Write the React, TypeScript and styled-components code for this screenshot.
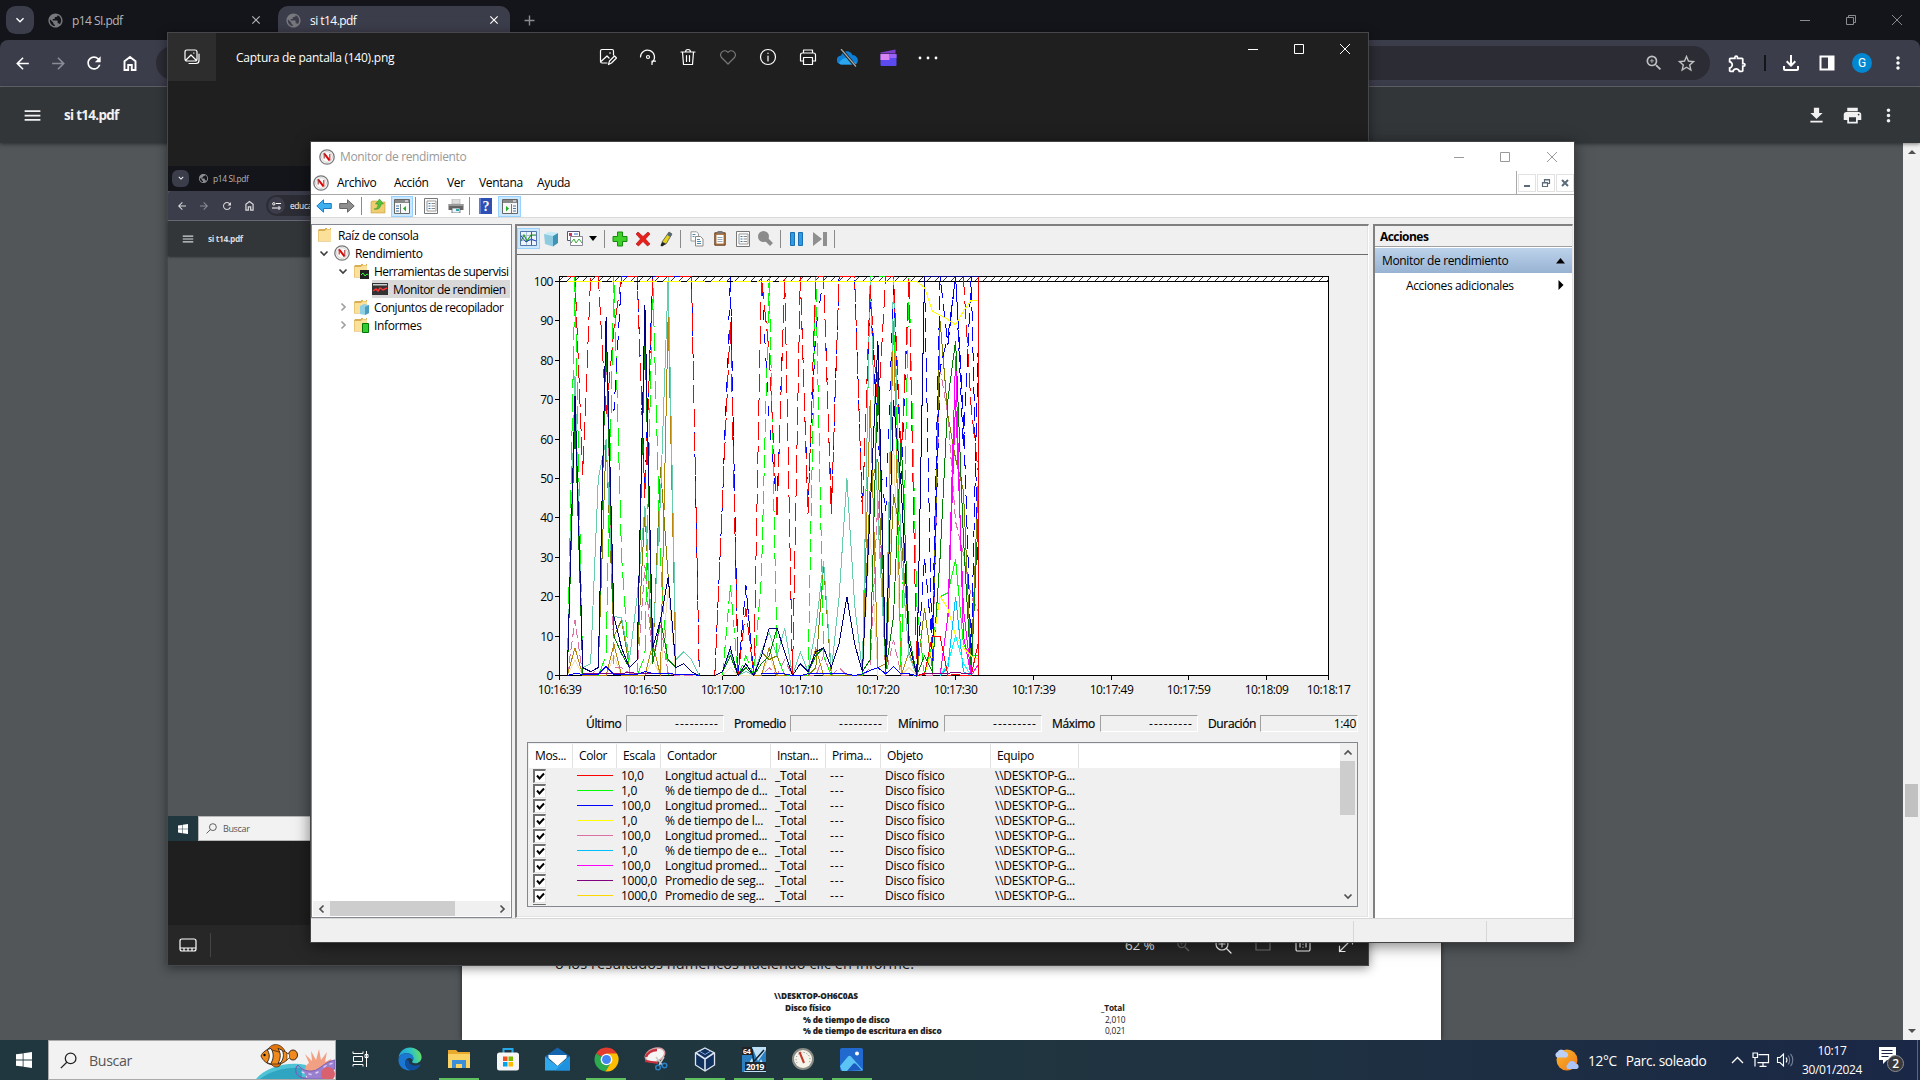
import React from "react";
import styled, { createGlobalStyle, css } from "styled-components";
import {
  MdArrowBack, MdArrowForward, MdRefresh, MdStarOutline, MdZoomIn, MdOutlineExtension,
  MdFileDownload, MdPrint, MdMoreVert, MdMenu, MdClose, MdAdd, MdOutlineFileDownload, MdPublic, MdExpandMore,
} from "react-icons/md";

const UI = `"Open Sans", "Noto Sans", sans-serif`;

const Global = createGlobalStyle`
  * { box-sizing: border-box; }
  html, body { margin: 0; padding: 0; overflow: hidden; background: #525659; }
  body { font-family: ${UI}; font-size: 12px; letter-spacing: -0.03em; }
  svg { display: block; flex: none; }
`;

const Screen = styled.div`
  position: relative;
  width: 1920px;
  height: 1080px;
  display: flex;
  flex-direction: column;
  overflow: hidden;
`;

const Cell = styled.span<{ $w: number; $h?: number; $on?: boolean }>`
  flex: none;
  display: flex;
  align-items: center;
  justify-content: center;
  width: ${(p) => p.$w}px;
  ${(p) => p.$h && css`height: ${p.$h}px;`}
  ${(p) => p.$on && css`background: #cce8ff; border: 1px solid #99d1ff;`}
`;
const Spacer = styled.span`flex: 1;`;
const Gap = styled.span<{ $w: number }>`flex: none; width: ${(p) => p.$w}px;`;

/* ---------- Chrome ---------- */
const TabStrip = styled.header`
  flex: none;
  display: flex;
  height: 40px;
  padding-left: 6px;
  background: #14151a;
  color: #c3c4c8;
`;
const TabSearch = styled.div<{ $s: number }>`
  display: flex;
  align-items: center;
  justify-content: center;
  width: ${(p) => p.$s}px;
  height: ${(p) => p.$s}px;
  border-radius: ${(p) => p.$s * 0.35}px;
  background: #3c3d4b;
  color: #fff;
`;
const Tab = styled.div<{ $active?: boolean; $w: number }>`
  display: flex;
  align-items: center;
  width: ${(p) => p.$w}px;
  height: 34px;
  margin-top: 6px;
  padding: 0 9px 6px 7px;
  border-radius: 10px 10px 0 0;
  color: ${(p) => (p.$active ? "#fff" : "#b4b5ba")};
  background: ${(p) => (p.$active ? "#3c3d4b" : "transparent")};
  svg:first-child { color: #77797e; margin-right: 8px; }
  span { flex: 1; letter-spacing: -0.045em; }
`;
const ChromeBar = styled.div`
  flex: none;
  display: flex;
  align-items: center;
  height: 47px;
  padding-left: 4px;
  color: #fff;
  background: #3c3d4b;
  border-bottom: 1px solid #6b6c76;
  border-radius: 8px 8px 0 0;
`;
const Strip = styled.div`background: #14151a; flex: none;`;
const Omnibox = styled.div`
  display: flex;
  align-items: center;
  justify-content: flex-end;
  width: 1554px;
  height: 34px;
  margin-left: 8px;
  padding-right: 8px;
  border-radius: 17px;
  background: #2b2c34;
  color: #bfc0c4;
`;
const Sep = styled.i<{ $c: string; $h: number; $w?: number }>`
  width: ${(p) => p.$w || 1}px;
  height: ${(p) => p.$h}px;
  background: ${(p) => p.$c};
`;
const Avatar = styled.b`
  width: 20px;
  height: 20px;
  border-radius: 50%;
  font: 12px/20px Roboto, sans-serif;
  text-align: center;
  color: #fff;
  background: #0288d1;
`;
const PdfBar = styled.div`
  position: relative;
  z-index: 1;
  flex: none;
  display: flex;
  align-items: center;
  height: 56px;
  padding: 0 14px;
  color: #f1f1f1;
  background: #323639;
  box-shadow: 0 1px 4px rgba(0, 0, 0, 0.5);
  font-size: 13.4px;
  font-weight: 700;
  letter-spacing: -0.05em;
`;
const PdfTitle = styled.span`flex: 1; padding-left: 14px;`;
const PdfView = styled.main`
  flex: 1;
  min-height: 0;
  display: flex;
  background: #525659;
`;
const PageArea = styled.div`flex: 1; display: flex; padding-left: 462px;`;
const Page = styled.article`
  width: 979px;
  padding: 811px 0 0 93px;
  overflow: hidden;
  background: #fff;
  box-shadow: 0 0 5px rgba(0, 0, 0, 0.6);
  color: #222;
`;
const Para = styled.p`
  margin: 0 0 16px;
  font-size: 14.5px;
  line-height: 20px;
  letter-spacing: 0.005em;
`;
const Report = styled.div`
  width: 420px;
  margin-left: 219px;
  font-size: 8.3px;
  font-weight: 700;
  letter-spacing: -0.02em;
  line-height: 11.8px;
`;
const ReportRow = styled.div<{ $in: number; $plain?: boolean }>`
  display: grid;
  grid-template-columns: 327px 1fr;
  b { padding-left: ${(p) => p.$in}px; }
  span { font-weight: ${(p) => (p.$plain ? 400 : 700)}; padding-left: ${(p) => (p.$plain ? 4 : 0)}px; }
`;
const PageScroll = styled.div`
  display: flex;
  flex-direction: column;
  align-items: center;
  width: 17px;
  padding: 6px 0;
  background: #f1f1f1;
  i { width: 13px; height: 33px; margin: 629px 0 auto; background: #c1c1c1; }
`;

/* ---------- Photos ---------- */
const Photos = styled.section`
  position: absolute;
  z-index: 2;
  left: 167px;
  top: 32px;
  width: 1202px;
  height: 934px;
  display: flex;
  flex-direction: column;
  border: 1px solid #46474a;
  background: #1f1f1f;
  box-shadow: 0 2px 10px rgba(0, 0, 0, 0.45);
  color: #fff;
`;
const PhotosHead = styled.div`
  display: flex;
  align-items: flex-start;
  height: 133px;
`;
const PhotosLogo = styled.div`
  display: flex;
  align-items: center;
  justify-content: center;
  width: 48px;
  height: 48px;
  background: #2d2d2d;
`;
const PhotosTitle = styled.div`
  width: 372px;
  padding-left: 20px;
  line-height: 50px;
  letter-spacing: -0.02em;
`;
const Picture = styled.div`
  height: 675px;
  width: 200px;
  display: flex;
  flex-direction: column;
  background: #525659;
  color: #d8d8da;
  font-size: 8.4px;
`;
const MiniTabs = styled.div`
  display: flex;
  align-items: center;
  height: 25px;
  padding: 0 0 1px 4px;
  gap: 9px;
  background: #14151a;
  color: #b4b5ba;
  svg { color: #8a8c90; }
  span { margin-left: -5px; }
`;
const MiniBar = styled.div`
  display: flex;
  align-items: center;
  height: 30px;
  padding-left: 3px;
  background: #3c3d4b;
  border-bottom: 1px solid #6b6c76;
  border-radius: 4px 0 0 0;
`;
const MiniPill = styled.div`
  display: flex;
  align-items: center;
  gap: 5px;
  height: 21px;
  flex: 1;
  margin-left: 6px;
  padding-left: 2px;
  border-radius: 11px 0 0 11px;
  background: #2b2c34;
  color: #fff;
  i { display: flex; align-items: center; justify-content: center; width: 17px; height: 17px; border-radius: 50%; background: #3c3d4b; }
`;
const MiniPdf = styled.div`
  display: flex;
  align-items: center;
  height: 35px;
  padding-left: 13px;
  gap: 13px;
  background: #323639;
  box-shadow: 0 1px 2px rgba(0, 0, 0, 0.5);
  font-weight: 700;
`;
const MiniTaskbar = styled.div`
  display: flex;
  height: 25px;
  margin-top: auto;
  background: #21373f;
`;
const MiniSearch = styled.div`
  flex: 1;
  display: flex;
  align-items: center;
  gap: 6px;
  padding-left: 7px;
  border: 1px solid #b8b8b8;
  background: #f2f2f2;
  color: #555;
  font-size: 9px;
`;
const PhotosFoot = styled.div`
  display: flex;
  align-items: center;
  height: 40px;
  margin-top: auto;
  background: #272727;
  font-size: 13.5px;
`;
const Zoom = styled.span`width: 38px; letter-spacing: -0.01em;`;

/* ---------- Performance monitor ---------- */
const Mmc = styled.section`
  position: absolute;
  z-index: 2;
  left: 310px;
  top: 141px;
  width: 1265px;
  height: 802px;
  display: flex;
  flex-direction: column;
  border: 1px solid #424446;
  background: #f0f0f0;
  box-shadow: 0 3px 14px rgba(0, 0, 0, 0.5);
  color: #000;
  white-space: nowrap;
`;
const TitleBar = styled.div`
  display: flex;
  align-items: center;
  height: 29px;
  padding-left: 8px;
  gap: 5px;
  background: #fff;
  color: #999;
`;
const MenuBar = styled.div`
  display: flex;
  align-items: center;
  height: 24px;
  padding-left: 2px;
  background: #fff;
  border-bottom: 1px solid #a9a9a9;
`;
const MenuItem = styled.span<{ $w: number }>`width: ${(p) => p.$w}px;`;
const MdiButtons = styled.div`
  display: flex;
  align-items: center;
  gap: 1px;
  height: 23px;
  padding-left: 1px;
  margin-left: auto;
  border-left: 1px solid #a9a9a9;
  i { display: flex; align-items: center; justify-content: center; width: 18px; height: 18px; border: 1px solid #e2e2e2; }
`;
const ToolBar = styled.div`
  display: flex;
  align-items: center;
  height: 23px;
  padding-left: 1px;
  background: #fff;
  border-bottom: 1px solid #dadada;
`;
const Body = styled.div`
  flex: 1;
  min-height: 0;
  display: flex;
  padding-top: 6px;
  background: #f0f0f0;
`;
const TreePane = styled.div`
  display: flex;
  flex-direction: column;
  width: 201px;
  margin-right: 3px;
  padding: 1px 1px 1px;
  border: 1px solid #828790;
  background: #fff;
`;
const TreeRow = styled.div<{ $in: number; $sel?: boolean; $tight?: boolean }>`
  display: flex;
  align-items: center;
  height: 18px;
  margin-left: ${(p) => p.$in}px;
  overflow: hidden;
  gap: 5px;
  letter-spacing: ${(p) => (p.$tight ? "-0.042em" : "-0.03em")};
  background: ${(p) => (p.$sel ? "#d9d9d9" : "transparent")};
`;
const HScroll = styled.div`
  display: flex;
  align-items: center;
  height: 15px;
  margin-top: auto;
  background: #f0f0f0;
  i { width: 125px; height: 15px; margin-right: auto; background: #cdcdcd; }
`;
const CenterPane = styled.div`
  display: flex;
  flex-direction: column;
  width: 854px;
  margin-right: 4px;
  border: 1px solid #fff;
  border-top: 2px solid #808080;
  border-left: 2px solid #808080;
  box-shadow: inset -1px -1px #e3e3e3;
`;
const ChartTools = styled.div`
  display: flex;
  align-items: center;
  height: 29px;
  padding-bottom: 3px;
  border-bottom: 1px solid #696969;
`;
const ChartBox = styled.div`height: 458px; width: 850px;`;
const Stats = styled.div`
  display: flex;
  align-items: center;
  height: 17px;
  margin-top: 2px;
  padding-left: 69px;
  -webkit-text-stroke: 0.2px #000;
`;
const StatLabel = styled.span<{ $w: number }>`width: ${(p) => p.$w}px;`;
const StatBox = styled.span<{ $last?: boolean }>`
  width: 98px;
  height: 17px;
  margin-right: 10px;
  padding-right: ${(p) => (p.$last ? 1 : 4)}px;
  border: 1px solid #fff;
  border-top-color: #a0a0a0;
  border-left-color: #a0a0a0;
  text-align: right;
  line-height: 15px;
  letter-spacing: ${(p) => (p.$last ? "-0.03em" : "0.085em")};
  -webkit-text-stroke: 0;
`;
const List = styled.div`
  display: flex;
  width: 831px;
  height: 165px;
  margin: 10px 0 0 10px;
  padding: 1px 2px 1px 1px;
  border: 1px solid #828790;
`;
const Rows = styled.div`flex: 1; overflow: hidden;`;
const Cols = css`
  display: grid;
  grid-template-columns: 44px 44px 44px 110px 55px 55px 110px 88px 1fr;
`;
const ListHead = styled.div`
  ${Cols}
  height: 24px;
  background: #fff;
  line-height: 24px;
  span { padding-left: 6px; border-right: 1px solid #e2e2e2; }
`;
const ListRow = styled.div`
  ${Cols}
  height: 15px;
  line-height: 15px;
  align-items: center;
  letter-spacing: -0.02em;
  span { padding-left: 4px; }
  span:nth-child(6) { letter-spacing: 0.08em; }
`;
const Check = styled.i`
  display: flex;
  align-items: center;
  justify-content: center;
  width: 13px;
  height: 14px;
  margin-left: 4px;
  background: #fff;
  border: 1px solid #e3e3e3;
  border-top: 2px solid #707070;
  border-left: 2px solid #707070;
`;
const Stroke = styled.i<{ $c: string }>`width: 36px; height: 1px; margin-left: 4px; background: ${(p) => p.$c};`;
const VScroll = styled.div`
  display: flex;
  flex-direction: column;
  align-items: center;
  justify-content: space-between;
  width: 15px;
  padding: 4px 0;
  background: #f0f0f0;
  i { width: 15px; height: 54px; margin: 3px 0 auto; background: #cdcdcd; }
`;
const ActionsPane = styled.div`
  flex: 1;
  margin-right: 1px;
  border-left: 2px solid #808080;
  border-top: 2px solid #808080;
  border-right: 1px solid #e3e3e3;
  background: #fff;
`;
const ActionsHead = styled.div`
  height: 21px;
  padding-left: 5px;
  border-bottom: 1px solid #a0a0a0;
  background: #f0f0f0;
  font-weight: 700;
  letter-spacing: -0.045em;
  line-height: 21px;
`;
const ActionsGroup = styled.div`
  display: flex;
  align-items: center;
  justify-content: space-between;
  height: 25px;
  margin-top: 1px;
  padding: 0 7px;
  background: linear-gradient(#bdd3eb, #98b2d2);
`;
const ActionsItem = styled.div`
  display: flex;
  align-items: center;
  justify-content: space-between;
  height: 24px;
  padding: 0 8px 0 31px;
`;
const StatusBar = styled.div`
  display: flex;
  height: 24px;
  border-top: 1px solid #d7d7d7;
  i { border-right: 1px solid #d7d7d7; margin-top: 2px; }
  i:nth-child(1) { width: 1043px; }
  i:nth-child(2) { width: 133px; }
`;

/* ---------- Taskbar ---------- */
const Taskbar = styled.footer`
  position: relative;
  z-index: 3;
  flex: none;
  display: flex;
  height: 40px;
  background: linear-gradient(90deg, #21373f 0%, #20363f 50%, #1c2c43 85%, #1a2746 100%);
  color: #fff;
`;
const Search = styled.div`
  display: flex;
  align-items: center;
  width: 288px;
  padding-left: 11px;
  gap: 12px;
  border: 1px solid #aaa;
  background: #f2f2f2;
  color: #555;
  font-size: 14.2px;
  span { flex: 1; }
`;
const AppButton = styled.div<{ $run?: boolean }>`
  display: flex;
  align-items: center;
  justify-content: center;
  width: 49.15px;
  border-bottom: 2px solid transparent;
  background: ${(p) => (p.$run ? "linear-gradient(#5fc05f, #5fc05f) center bottom / 40px 2px no-repeat border-box" : "none")};
`;
const Weather = styled.span`
  display: flex;
  align-items: center;
  gap: 9px;
  width: 146px;
  padding-left: 9px;
  font-size: 13.7px;
`;
const Clock = styled.span`
  width: 70px;
  padding-top: 1px;
  text-align: center;
  line-height: 19px;
`;

/* ---------- Drawings ---------- */
const WinMin = ({ c }: { c: string }) => <svg width="12" height="12"><path d="M1 6.5h10" stroke={c} /></svg>;
const WinMax = ({ c }: { c: string }) => <svg width="12" height="12"><path d="M1.500 1.500h9v9h-9z" stroke={c} fill="none" /></svg>;
const WinClose = ({ c }: { c: string }) => <svg width="12" height="12"><path d="M1 1l10 10M11 1L1 11" stroke={c} fill="none" /></svg>;
const Home = ({ s = 20 }) => (
  <svg width={s} height={s} viewBox="0 0 20 20" fill="none" stroke="currentColor" strokeWidth="1.9"><path d="M4.500 8.200L10 4l5.500 4.200V17h-3.700v-5H8.200v5H4.500z" /></svg>
);
const Gauge = ({ s = 16 }) => (
  <svg width={s} height={s} viewBox="0 0 16 16">
    <circle cx="8" cy="8" r="7.200" fill="#fff" stroke="#777" strokeWidth="1.300" />
    <circle cx="8" cy="8" r="5.400" fill="#fafafa" stroke="#bbb" strokeWidth=".7" />
    <path d="M5.200 4.500l5.300 6.800" stroke="#d00" strokeWidth="2" />
    <path d="M5.200 4v5.500M10.800 5v6.500" stroke="#a33" strokeWidth="1.100" />
  </svg>
);
const BigGauge = () => (
  <svg width="24" height="26" viewBox="0 0 24 26">
    <circle cx="12" cy="13" r="11" fill="#8d8d86" /><circle cx="12" cy="13" r="9" fill="#f5f3ea" />
    <path d="M6 17A7 7 0 1 1 18 17" fill="none" stroke="#777" strokeWidth="1" strokeDasharray="1 2" />
    <path d="M8.500 6l4.500 11" stroke="#c0392b" strokeWidth="2" />
  </svg>
);
const Folder = ({ k }: { k?: "mon" | "cube" | "rep" }) => (
  <svg width="16" height="16" viewBox="0 0 16 16">
    <path d="M1 3.500l1-1.500h6V1h6v13.500H1z" fill="#d9ae52" />
    <path d="M1.500 4H8l1-1.500h5V14H1.500z" fill="#fbe09a" /><path d="M10 1.500h3" stroke="#fff" />
    {k === "mon" && <><path d="M7 7h9v9H7z" fill="#222" /><path d="M8 12l2-2 2 3 2-2 1.500 1" stroke="#3f3" fill="none" /></>}
    {k === "cube" && <><path d="M7 7l4-2 5 1v8l-4 2-5-1z" fill="#8fcfe4" /><path d="M12 8l4-2v8l-4 2z" fill="#4a9dbd" /></>}
    {k === "rep" && <path d="M9.500 6.500h6v9h-6z" fill="#3c3" stroke="#070" />}
  </svg>
);
const MonitorIcon = () => (
  <svg width="16" height="14" viewBox="0 0 16 14"><path d="M0 1h16v12H0z" fill="#333" /><path d="M1 2h14v1.500H1z" fill="#ccc" /><path d="M1 9l3-2 2 2 2-3 3 2 4-2" fill="none" stroke="#f33" strokeWidth="1.500" /></svg>
);
const Flip = styled.span`display: flex; transform: scaleX(-1);`;
const ArrowShape = ({ fill, stroke }: { fill: string; stroke: string }) => (
  <svg width="16" height="14" viewBox="0 0 16 14"><path d="M.8 7L7.500.8v3.700h7.800v5H7.500v3.700z" fill={fill} stroke={stroke} /></svg>
);
const UpFolder = () => (
  <svg width="16" height="16" viewBox="0 0 16 16"><path d="M1 4l1-1h5l1 1h7v11H1z" fill="#f0cd72" stroke="#c69a3a" strokeWidth=".6" /><path d="M4 11c3 0 4-2 4-5H5.500L9.500 1l4 5H11c0 4-3 6-7 5z" fill="#55c03a" stroke="#2c8a1c" strokeWidth=".5" /></svg>
);
const TreeToggle = ({ right }: { right?: boolean }) => (
  <svg width="16" height="15" viewBox="0 0 16 15"><path d="M.5.5h15v14H.5z" fill="#f7f7f7" stroke="#666" /><path d="M1 1h14v3H1z" fill="#888" /><path d="M11 2h3" stroke="#fff" /><path d={right ? "M9.500 5v9" : "M6.500 5v9"} stroke="#777" />{right ? <><path d="M4 7l3 2.500-3 3z" fill="#1fae1f" /><path d="M11 7h3M11 9.500h3M11 12h3" stroke="#4477aa" /></> : <><path d="M12 7L9 9.500l3 3z" fill="#1fae1f" /><path d="M2 7h3M2 9.500h3M2 12h3" stroke="#4477aa" /></>}</svg>
);
const Props = () => (
  <svg width="16" height="16" viewBox="0 0 16 16"><path d="M1.500.500h13v15h-13z" fill="#fafafa" stroke="#777" /><path d="M4 3h9v10H4z" fill="#fff" stroke="#999" /><path d="M5.500 5.500h2M5.500 8h2M5.500 10.500h2" stroke="#37a" /><path d="M8.500 5.500h3.500M8.500 8h3.500M8.500 10.500h3.500" stroke="#888" /></svg>
);
const Printer = () => (
  <svg width="16" height="14" viewBox="0 0 16 14"><path d="M4 0h8v5H4z" fill="#ddd" stroke="#aaa" strokeWidth=".6" /><path d="M.5 5h15v6H.5z" fill="#666" /><path d="M1 5h14v2H1z" fill="#999" /><path d="M4 9h8v5H4z" fill="#e8f3fa" stroke="#555" strokeWidth=".7" /><path d="M8 10h3v2H8z" fill="#2aa7b0" /></svg>
);
const Help = () => (
  <svg width="13" height="16" viewBox="0 0 13 16"><rect width="13" height="16" fill="#2e4fb4" /><path d="M1 0v16" stroke="#8fa5e6" /><text x="3.500" y="13" fontSize="14" fontWeight="700" fill="#fff" fontFamily="Liberation Serif, serif">?</text></svg>
);
const LineChart = () => (
  <svg width="17" height="15" viewBox="0 0 17 15"><path d="M.5.5h16v14H.5z" fill="#eef4fb" stroke="#5577aa" /><path d="M1 4.500h15M1 9.500h15M6.500 1v13" stroke="#a9bfdc" /><path d="M1 10l3-6 3 6 4-6h5" fill="none" stroke="#2a9a2a" strokeWidth="1.200" /><path d="M1 5l5 6 5-3 5 2" fill="none" stroke="#2244bb" /><path d="M11.500 1v13" stroke="#d22" /></svg>
);
const Cube = () => (
  <svg width="16" height="16" viewBox="0 0 16 16"><path d="M1 3l6-2.500L15 2l-5 3z" fill="#c7ecf7" /><path d="M1 3l9 2v10.500L2 13z" fill="#8fcbe0" /><path d="M10 5l5-3v10l-5 3.500z" fill="#3f93b4" /></svg>
);
const ChartPic = () => (
  <svg width="16" height="15" viewBox="0 0 16 15"><path d="M.5.500h12v9H.5z" fill="#fff" stroke="#557" /><path d="M2 2h3v3H2z" fill="#c36" /><path d="M7 3h4" stroke="#36c" /><path d="M3.500 5.500h12v9h-12z" fill="#fff" stroke="#889" /><path d="M4 12l3-4 2 4 3-4 3 4" fill="none" stroke="#3a3" /></svg>
);
const Plus = () => <svg width="16" height="16" viewBox="0 0 16 16"><path d="M5.500 1h5v4.500H15v5h-4.500V15h-5v-4.500H1v-5h4.500z" fill="#3fd02a" stroke="#158a0d" /></svg>;
const Cross = () => <svg width="16" height="16" viewBox="0 0 16 16"><path d="M3 1l5 4.500L13 1l2 2-4.500 5 4.500 5-2.500 2L8 10.500 3.500 15 1 13l4.500-5L1 3z" fill="#e8201c" stroke="#a30d0d" strokeWidth=".6" /></svg>;
const Pen = () => <svg width="16" height="16" viewBox="0 0 16 16"><path d="M11 1l3 2-6 10-4-2z" fill="#e3d21e" stroke="#554" strokeWidth=".8" /><path d="M11 1l3 2-1.500 3-3.500-2z" fill="#567" /><path d="M4 11l4 2-4 2.500-1.500-1z" fill="#222" /></svg>;
const Copy = () => <svg width="14" height="16" viewBox="0 0 14 16"><path d="M1 .8h5.500l2 2V10H1z" fill="#fff" stroke="#999" /><path d="M5.500 5.500h5l2.500 2.500v7H5.500z" fill="#fff" stroke="#888" /><path d="M2.500 3.500h3M2.500 5.500h2M7 8.500h3M7 10.500h4M7 12.500h4" stroke="#58a" /></svg>;
const Paste = () => <svg width="12" height="15" viewBox="0 0 12 15"><path d="M.8 1.800h10.400v12.400H.8z" fill="#b87a45" stroke="#5f3a1b" /><path d="M2.500 4h7v8.500h-7z" fill="#fff" /><path d="M3.500 0h5v3h-5z" fill="#777" /><path d="M3.500 6.500h5M3.500 8.500h5M3.500 10.500h5" stroke="#9ab" /></svg>;
const Lens = () => <svg width="15" height="15" viewBox="0 0 15 15"><circle cx="5.500" cy="5.500" r="5.500" fill="#8b8b8b" /><path d="M8 8l5.500 5.500" stroke="#8b8b8b" strokeWidth="4" /></svg>;
const Pause = () => <svg width="13" height="14"><path d="M.5.5h4v13h-4zM8.500.5h4v13h-4z" fill="#2e9be6" stroke="#1b6fb0" /></svg>;
const Step = () => <svg width="14" height="14"><path d="M0 0l9 7-9 7zM10 0h4v14h-4z" fill="#8f8f8f" /></svg>;
const Chevron = ({ d, c = "#404040" }: { d: "down" | "right" | "left" | "up"; c?: string }) => {
  const path = { down: "M1.500 3.500l3.500 3.500 3.500-3.500", up: "M1.500 6.500L5 3l3.500 3.500", right: "M3.500 1.500L7 5 3.500 8.500", left: "M6.500 1.500L3 5l3.500 3.500" }[d];
  return <svg width="10" height="10"><path d={path} fill="none" stroke={c} strokeWidth="1.700" /></svg>;
};
const WinLogo = ({ s }: { s: number }) => (
  <svg width={s} height={s} viewBox="0 0 16 16" fill="#fff"><path d="M0 2.300L6.700 1.400v6.200H0zM7.500 1.300L16 0v7.600H7.500zM0 8.400h6.700v6.200L0 13.700zM7.500 8.400H16V16l-8.500-1.300z" /></svg>
);
const Mag = ({ s, c }: { s: number; c: string }) => (
  <svg width={s} height={s} viewBox="0 0 16 16" fill="none" stroke={c} strokeWidth="1.200"><circle cx="10" cy="6" r="5" /><path d="M6.400 9.600L.8 15.200" /></svg>
);
const Fish = () => (
  <svg width="79" height="38" viewBox="0 0 79 38">
    <path d="M0 38C10 26 32 20 50 24v14z" fill="#4fc3d6" />
    <path d="M4 38c12-9 26-12 42-11v11z" fill="#2fa5c2" />
    <path d="M5 15C8 7 22 4 31 12c2 2 2 5 0 7-9 8-22 6-26-4z" fill="#f08a1c" stroke="#3a2412" strokeWidth=".9" />
    <path d="M12 8c6-8 14-4 17 2l-6 1zM15 23c3 4 8 4 10 0z" fill="#e0750d" stroke="#3a2412" strokeWidth=".7" />
    <path d="M11 8.500c3 4 3 9 0 13l3.500 1.500c3.500-5 3.500-11 .5-15.500zM22 7.500c3 5 3 9 0 15l3-1c3-5 3-9 1-12.500z" fill="#fff" stroke="#222" strokeWidth=".9" />
    <ellipse cx="37" cy="14" rx="4.500" ry="5" fill="#f08a1c" stroke="#3a2412" strokeWidth="1" /><path d="M31 12l2.500 1.500v3L31 19z" fill="#fff" stroke="#222" strokeWidth=".6" />
    <circle cx="8.500" cy="14" r="1.200" />
    <path d="M50 34c-3-6 0-10 3-12l-4-9 7 7-1-10 5 9 3-11 2 11 6-8-2 10 6-3v16z" fill="#f2a083" />
    <path d="M42 24c-5 5-2 14 10 13M42 24c4 6 14 8 20 4s10-8 17-9v9c-6 0-8 5-9 10H52C42 38 36 30 42 24z" fill="#9a80cf" stroke="#7a5fb5" />
    <path d="M46 31l2 1M53 33l2 .5M60 32l2-1M68 26l2-1.500M74 23l2-.6" stroke="#d9cdf2" strokeWidth="1.500" strokeLinecap="round" />
    <circle cx="72" cy="33" r="7" fill="#d9606e" />
  </svg>
);
const TaskView = () => <svg width="18" height="16" viewBox="0 0 18 16" fill="none" stroke="#fff"><path d="M1 .5v2h10v-2M1 15.500v-2h10v2M1.500 5.500h9v5h-9zM14.500 0v16M13 3.500h3v3h-3z" /></svg>;
const Edge = () => (
  <svg width="24" height="24" viewBox="0 0 24 24">
    <defs><linearGradient id="eg" x1="0" y1=".5" x2="1" y2=".3"><stop offset="0" stopColor="#1b9de2" /><stop offset=".55" stopColor="#2fc2c4" /><stop offset="1" stopColor="#6be05c" /></linearGradient></defs>
    <path d="M.6 11C1 5 6 .5 12 .5S23.600 5 23.600 10c0 4-3 6.300-6.500 6.300-2.200 0-3-.8-3-1.500 0-1 1.300-1.300 1.300-3.600C15.400 8 12 6.300 8.500 6.300 4.500 6.300 1.500 8.500.6 11z" fill="url(#eg)" />
    <path d="M.5 12.500C1 8.500 4.500 6.300 8.500 6.300c3.500 0 6.900 1.700 6.900 4.900 0 .9-.3 1.500-.6 2C14 10.500 9 9.500 7.500 14c-1.200 4 1.500 8.500 5.500 9.300C6 24.300 0 19 .5 12.500z" fill="#1a78d2" />
    <path d="M7.500 14c-1.200 4 1.500 8.500 5.500 9.300 4 .3 7.500-1.800 9.300-5 .3-.6-.2-1-.8-.7-4.500 2.300-10.500.7-11-4.600-1 .1-2.500.2-3 1z" fill="#0f4f9e" />
  </svg>
);
const Explorer = () => <svg width="24" height="22" viewBox="0 0 24 22"><path d="M1 2h8l2 2h12v16H1z" fill="#e9a92c" /><path d="M1 6h22v14H1z" fill="#fbd264" /><path d="M5 12h14v8h-4v-4H9v4H5z" fill="#3a8fd6" /></svg>;
const Store = () => <svg width="24" height="24" viewBox="0 0 24 24"><path d="M7.500 6V2h9v4" fill="none" stroke="#29a9e8" strokeWidth="2" /><rect x="1" y="5.500" width="22" height="18" rx="2.500" fill="#f6f6f6" /><path d="M7 9.500h4.500V14H7z" fill="#f25022" /><path d="M12.500 9.500H17V14h-4.500z" fill="#7fba00" /><path d="M7 15h4.500v4.500H7z" fill="#00a4ef" /><path d="M12.500 15H17v4.500h-4.500z" fill="#ffb900" /></svg>;
const Mail = () => <svg width="25" height="24" viewBox="0 0 25 24"><path d="M0 9.500L12.500.5 25 9.500v3H0z" fill="#1565ae" /><path d="M3.500 8h18v3l-9 8-9-8z" fill="#fff" /><path d="M0 9.500l12.500 9.500L25 9.500V23.500H0z" fill="#2fa9ee" /><path d="M3.500 8.500h18L12.500 17z" fill="#fff" /><path d="M25 9.500v14H10z" fill="#1787d8" opacity=".7" /></svg>;
const ChromeLogo = () => <svg width="25" height="25" viewBox="0 0 24 24"><path d="M12 12L2 6.200A11.500 11.500 0 0 1 22 6.200z" fill="#e33b2e" /><path d="M12 12L2 6.200A11.500 11.500 0 0 0 11 23.500l5-8z" fill="#2da94f" /><path d="M12 6.300h10A11.500 11.500 0 0 1 11 23.500l5.500-9z" fill="#fdbd00" /><circle cx="12" cy="12" r="5.600" fill="#fff" /><circle cx="12" cy="12" r="4.300" fill="#4285f4" /></svg>;
const Snip = () => <svg width="25" height="24" viewBox="0 0 25 24"><ellipse cx="12" cy="8" rx="10" ry="6.500" transform="rotate(-20 12 8)" fill="#f5f5f5" stroke="#d8a0a4" strokeWidth="1.500" /><path d="M3 10c1-4 6-7 11-7" stroke="#c9303e" strokeWidth="2.500" fill="none" /><path d="M2 14l13 2" stroke="#c9303e" strokeWidth="2" /><path d="M13 10l6 8M21 10l-5 8" stroke="#ccc" strokeWidth="1.500" /><circle cx="15" cy="20.500" r="2.300" fill="none" stroke="#2a7fc0" strokeWidth="1.500" /><circle cx="21.500" cy="18.500" r="2.300" fill="none" stroke="#2a7fc0" strokeWidth="1.500" /></svg>;
const VBox = () => <svg width="22" height="25" viewBox="0 0 22 25"><path d="M11 1l9.500 5v12L11 24l-9.500-6V6z" fill="#10305e" stroke="#dde6f2" strokeWidth="1.300" /><path d="M2 6l9 6 9-6M11 12v11" stroke="#dde6f2" strokeWidth="1.600" fill="none" /><path d="M6 4.500l5 3 5-3" stroke="#7fa5d8" fill="none" /></svg>;
const App2019 = () => (
  <svg width="24" height="25" viewBox="0 0 24 25"><path d="M0 0h24v25H0z" fill="#2a7fc0" /><path d="M10 0l6 14L24 3v-3zM2 25l8-14 6 8 3-7 5 10v3z" fill="#bfe0f5" /><path d="M10 2l3 22M22 3L7 20" stroke="#123" strokeWidth="1.500" /><rect width="10" height="8" fill="#222" /><text x="1" y="7" fontSize="7" fill="#fff" fontFamily="Open Sans" fontWeight="700">64</text><rect x="3" y="15" width="21" height="9" fill="#1b2733" /><text x="4" y="23" fontSize="8.500" fill="#fff" fontFamily="Open Sans" fontWeight="700">2019</text></svg>
);
const PhotosApp = () => <svg width="23" height="23" viewBox="0 0 23 23"><rect width="23" height="23" rx="2" fill="#2168cf" /><path d="M0 18L8 8.500c1-1 2-1 3 0L23 22l-2 1H2z" fill="#5cc3f5" /><path d="M7 23l6-7c1-1 2-1 3 0l6 6.500z" fill="#1c5cc0" /><circle cx="17" cy="5.500" r="2" fill="#fff" /></svg>;
const Sun = () => (
  <svg width="26" height="24" viewBox="0 0 26 24"><defs><linearGradient id="sn" x1="0" y1="0" x2="1" y2="1"><stop offset="0" stopColor="#fbb62a" /><stop offset="1" stopColor="#ee7a1b" /></linearGradient></defs><circle cx="13" cy="12" r="10.500" fill="url(#sn)" /><path d="M3 9.500a3 3 0 0 1 .5-5.500A4 4 0 0 1 11 4a2.900 2.900 0 0 1 1.500 5.500z" fill="#bcd0f7" /><path d="M13.500 21a3 3 0 0 1 .5-5 4.200 4.200 0 0 1 8-.2 2.700 2.700 0 0 1 1 5.200z" fill="#aac4f5" /></svg>
);
const Net = () => <svg width="18" height="16" viewBox="0 0 18 16" fill="none" stroke="#fff" strokeWidth="1.200"><path d="M6.500 2.600h10v8H5.500M11 10.500v3.500M7.500 14.400h7M3 6v8.400" /><path d="M1 1h4.500v4.500H1z" fill="#1c2b44" /></svg>;
const Vol = () => <svg width="18" height="16" viewBox="0 0 18 16" fill="none" stroke="#fff" strokeWidth="1.100"><path d="M1.500 5.500h2.500l3.500-3.500v12L4 10.500H1.500z" /><path d="M10 5.500c1.200 1.500 1.200 3.500 0 5" /><path d="M12.200 3.500c2 2.500 2 6.500 0 9M14.500 1.800c3 3.500 3 9 0 12.400" stroke="#77829a" /></svg>;
const Notice = () => (
  <svg width="28" height="28" viewBox="0 0 28 28"><path d="M2 1h17v13H10l-4 4v-4H2z" fill="#fff" /><path d="M4.500 4.500h11M4.500 7.500h11M4.500 10.500h7" stroke="#1b2845" strokeWidth="1.200" /><circle cx="18.500" cy="17.500" r="8" fill="#3a3a3c" stroke="#8a8f9a" /><text x="15.200" y="22" fontSize="12" fontWeight="600" fill="#fff" fontFamily="Open Sans">2</text></svg>
);
const LineIcon = ({ d, c = "#fff", fill }: { d: string; c?: string; fill?: string }) => (
  <svg width="18" height="18" viewBox="0 0 18 18" fill={fill || "none"} stroke={c} strokeWidth="1.200" strokeLinecap="round" strokeLinejoin="round"><path d={d} /></svg>
);
const OneDriveOff = () => <svg width="22" height="18" viewBox="0 0 22 18"><path d="M4.500 15.500a4.500 4.500 0 0 1-.5-9C6 1.500 13 .5 15.500 6 22 6.500 22.500 15 17.500 15.500z" fill="#0d7fd6" /><path d="M2 14c3-5 8-6 10-4.500l7.500 4.500c-.5 1-1 1.500-2 1.500h-13c-1 0-2-.6-2.500-1.500z" fill="#2aa7ee" /><path d="M4 0l15 18" stroke="#1f1f1f" strokeWidth="3" /><path d="M4 0l15 17.500" stroke="#aaa" strokeWidth="1.200" /></svg>;
const Clip = () => <svg width="17" height="17" viewBox="0 0 17 17"><path d="M.5 3.500L15.500.5v4H.5z" fill="#7d3fd0" /><rect x=".5" y="5" width="16" height="12" rx="1" fill="#5a4af0" /><path d="M.5 5h9v6h-9z" fill="#d884f2" /><path d="M9.500 5h7v4h-7z" fill="#9a63f5" /></svg>;

/* ---------- Chart ---------- */
type Series = { c: string; from: number; v: number[]; dash?: string; off?: number };
const T = 101.2;
const series: Series[] = [
  { c: "#f5deb3", from: 1, v: [0, 4, 0, 0, 0, 0, 5, 0, 0, 0, 0, 4, 0, 22, 0, 0, 0, 0] },
  { c: "#f5deb3", from: 20, v: [0, 0, 2, 0, 0, 0, 0, 5, 0, 0, 0, 0, 0, 2, 0, 0, 0, 0, 0, 0, 36, 0, 0, 60, 0, 2, 0] },
  { c: "#db70a3", from: 1, v: [0, 14, 0, 0, 2, 86, 2, 2, 0.6, 0.5, 28, 3, 13, 0.5, 0, 0, 0, 0], dash: "9 4" },
  { c: "#db70a3", from: 25, v: [0, 0, 2, 0, 4, 0, 0, 0, 0, 5, 0, 2, 0, 0, 0, 2, 45, 0, 9, 0, 0, 0, 0, 0, 78, 66, 39, 31, 20, 16], dash: "9 4" },
  { c: "#b8860b", from: 1, v: [0, 7, 0, 0, 0, 0, 8, 0, 0, 0, 0, 8, 0, 92, 0] },
  { c: "#b8860b", from: 25, v: [0, 0, 7, 0, 0, 0, 0, 0, 7, 0, 0, 0, 0, 0, 0, 70, 2, 3, 90, 0, 6, 0] },
  { c: "#808000", from: 5, v: [2, 60, 10, 14, 2, 4, 42, 4, 53, 25, 2] },
  { c: "#808000", from: 25, v: [0, 6, 4, 5, 0, 0, 0, 0, 2, 28, 0, 0, 0, 0, 0, 48, 55, 0, 46, 35, 10, 0, 17, 2, 90, 66, 55, 47, 2, 54] },
  { c: "#0f0", from: 1, v: [0, T, 0], dash: "18 6" },
  { c: "#0f0", from: 5, v: [0, 5, T, 30, 1], dash: "18 6" },
  { c: "#0f0", from: 10, v: [0, 5, T, 28, 0], dash: "18 6" },
  { c: "#0f0", from: 21, v: [0, 23, 0, 5, 0, 25, T, 5, 0, 0, 0, 0, T, 5, 0], dash: "13 5" },
  { c: "#0f0", from: 39, v: [0, T, T, T, T, 0, T, 18, 0], dash: "18 6" },
  { c: "#0f0", from: 47, v: [0, 8, 20, 21, 29.5, 8, 5, 5] },
  { c: "#66cdaa", from: 1, v: [0, 76, 2, 3, 50, 60, 15, 14.6, 4, 20, 43, 7, 45, T, 4, 6, 4, 0] },
  { c: "#66cdaa", from: 20, v: [0, 1, 6, 0, 1, 0, 6, 11, 5, 12, 0, 6, 1, 12, 29, 1, 20, 50, 18, 1, T, 40, 2, T, 30, 5, 0] },
  { c: "#00f", from: 7, v: [67, T, T, T, 47, T], dash: "14 8", off: 4 },
  { c: "#00f", from: 12, v: [T, T, T, T, T, T, 0], dash: "14 8", off: 4 },
  { c: "#00f", from: 20, v: [0, 45, T, 0, 23, 0, T, 65, 43, T, 0, T, 43, 88, T, 43, T, T, T, 42, 97, 60, 41, 98, 50, T, 0], dash: "10 14", off: 4 },
  { c: "#00f", from: 22, v: [T, 0, 23, 0], dash: "14 6" },
  { c: "#00f", from: 46, v: [0, 30, 8, T, 84, T, 58, T, 20], dash: "14 6" },
  { c: "#00f", from: 46, v: [0, T, 2, 78, 86, T, 66, 5, 92], dash: "14 6" },
  { c: "#f00", from: 1, v: [T, T, 51, T, T, 66, 88, T, T, T, 45, T, T, T, T, T, T, 0], dash: "18 6" },
  { c: "#f00", from: 20, v: [0, 45, 90, 0, 17, 0, T, 82, 40, T, 0, T, 41, T, T, 41, T, T, T, 41, 99, 66, T, T, 55, T, 0], dash: "18 6" },
  { c: "#f00", from: 52, v: [T, 68, 50], dash: "18 6" },
  { c: "#008000", from: 1, v: [0, 66, 0] },
  { c: "#008000", from: 5, v: [2, 86, 10, 5.5, 2, 4, 87, 3, 14, 4, 2] },
  { c: "#008000", from: 20, v: [0, 1, 5, 0, 2, 0, 3, 5, 12, 6, 0, 3, 1, 5, 7, 2, 8, 20, 8, 1, 4, 77, 1, 15, 60, 10, 0, 5, 1, 30, 70, 85, 35, 0, 45] },
  { c: "#000080", from: 1, v: [0, 71, 2, 1, 2, 91, 15, 7, 2, 4, 94, 7, 14, 25, 2, 3, 1, 0] },
  { c: "#000080", from: 20, v: [0, 1, 7, 0, 3, 0, 5, 12, 12, 6, 0, 3, 1, 6, 7, 2, 8, 20, 8, 1, 42, 85, 2, 70, 48, 8, 0, T, T, T, T, T, T, T, T] },
  { c: "#f0f", from: 49, v: [0, 15, 81, 10, 0, 3] },
  { c: "#f0f", from: 50, v: [14, 70, 17, 0] },
  { c: "#ff0", from: 1, v: [...Array(45).fill(100), 100, 98.5, 92.5, 91.5, 90.3, 89, 92.5, 95.2, 95.2] },
  { c: "#ff0", from: 47, v: [0, 7, 20, 17, 10, 7, 5, 4] },
  { c: "#00bfff", from: 49, v: [0, 2, 20, 1, 0] },
  { c: "#0ff", from: 49, v: [0, 3, 10, 3, 0] },
  { c: "#800080", from: 3, v: [0.5, 0.5, 0.5, 0.5, 0.5, 0.5, 0.8, 0.5, 0.5, 0.5, 0.5, 0.5] },
  { c: "#800080", from: 46, v: [0, 0.5, 0.5, 0.5, 0.5, 0.9, 0.5, 0.5] },
  { c: "#00f", from: 1, v: [0, 0.5, 0.3, 0.3, 0.3, 2.3, 0.3, 0.3, 0.3, 0.3, 1, 0.5, 0.5, 0.5, 0.3, 0.3, 0.3, 0] },
  { c: "#00f", from: 26, v: [0.4, 0.4, 0.4, 0.4, 0, 0, 0.4, 0.4, 0.4, 0.4, 0.4, 0.4, 0, 0.4, 1.3, 2, 0.4, 2.2, 0.4, 0.4, 0] },
  { c: "#f00", from: 46, v: [0, 0.3, 10, 10, 0, 0.3, 0, 0, 9] },
];
const OX = 517;
const OY = 255;
const px = (n: number) => 559.5 - OX + n * 7.767;
const py = (v: number) => 675.5 - OY - v * 3.94;
const times: [string, number][] = [
  ["10:16:39", 559.5], ["10:16:50", 644.5], ["10:17:00", 722.5], ["10:17:10", 800.5], ["10:17:20", 877.5], ["10:17:30", 955.5],
  ["10:17:39", 1033.5], ["10:17:49", 1111.5], ["10:17:59", 1188.5], ["10:18:09", 1266.5], ["10:18:17", 1328.5],
];
const Plot = styled.svg`
  font-family: ${UI};
  font-size: 12px;
  letter-spacing: -0.04em;
  fill: #000;
`;
const Chart = () => (
  <Plot width="850" height="458">
    <defs>
      <pattern id="hatch" width="8" height="5" patternUnits="userSpaceOnUse" y="22"><path d="M1 5L6 0" stroke="#000" strokeWidth=".8" /></pattern>
    </defs>
    <rect x="42" y="21" width="770" height="400" fill="#fff" />
    <rect x="43" y="22" width="769" height="5" fill="url(#hatch)" />
    <g shapeRendering="crispEdges" fill="none" stroke="#000">
      <path d="M42.500 421V21.500H811.500V420.500M42 26.500H811M38 420.500H812" />
      {Array.from({ length: 11 }, (_, i) => <path key={i} d={`M38 ${Math.round(py(i * 10) - 0.5) + 0.5}h4`} />)}
      {times.map(([t, x]) => <path key={t} d={`M${x - OX} 421v4`} />)}
      {series.map((s, i) => (
        <polyline key={i} stroke={s.c} strokeDasharray={s.dash} strokeDashoffset={s.off}
          points={s.v.map((v, k) => `${px(s.from + k).toFixed(1)},${py(v).toFixed(1)}`).join(" ")} />
      ))}
      <path d="M85 26.500h10M117 26.500h6M140 26.500h6M164 26.500h6M188 26.500h6M210 26.500h6M234 26.500h6M256 26.500h6" stroke="#000" />
      <path d="M461.500 22V420" stroke="#f00" />
    </g>
    {Array.from({ length: 11 }, (_, i) => <text key={i} x="36" y={py(i * 10) + 4.5} textAnchor="end">{i * 10}</text>)}
    {times.map(([t, x]) => <text key={t} x={x - OX} y="439" textAnchor="middle">{t}</text>)}
  </Plot>
);

const counters: [string, string, string][] = [
  ["#f00", "10,0", "Longitud actual d..."], ["#0f0", "1,0", "% de tiempo de d..."], ["#00f", "100,0", "Longitud promed..."],
  ["#ff0", "1,0", "% de tiempo de l..."], ["#db70a3", "100,0", "Longitud promed..."], ["#00bfff", "1,0", "% de tiempo de e..."],
  ["#f0f", "100,0", "Longitud promed..."], ["#800080", "1000,0", "Promedio de seg..."], ["#ffd700", "1000,0", "Promedio de seg..."],
];
const CheckMark = () => <svg width="9" height="9"><path d="M1 3.500l2.500 3L8 1.500" fill="none" stroke="#000" strokeWidth="2" /></svg>;

const ChromeWindow = () => (
  <>
    <TabStrip>
      <Cell $w={28} $h={40}><TabSearch $s={28}><MdExpandMore size={16} /></TabSearch></Cell>
      <Gap $w={6} />
      <Tab $w={232}><MdPublic size={17} /><span>p14 SI.pdf</span><MdClose size={14} /></Tab>
      <Gap $w={6} />
      <Tab $w={232} $active><MdPublic size={17} /><span>si t14.pdf</span><MdClose size={14} /></Tab>
      <Cell $w={39} $h={40}><MdAdd size={17} color="#8a8b90" /></Cell>
      <Spacer />
      <Cell $w={46} $h={40}><WinMin c="#8a8b90" /></Cell>
      <Cell $w={46} $h={40}><svg width="12" height="12" fill="none" stroke="#8a8b90"><path d="M1.500 3.500h7v7h-7zM3.500 3V1.500h7v7H9" /></svg></Cell>
      <Cell $w={46} $h={40}><WinClose c="#8a8b90" /></Cell>
    </TabStrip>
    <Strip>
      <ChromeBar>
        <Cell $w={36}><MdArrowBack size={19} /></Cell>
        <Cell $w={36}><MdArrowForward size={19} color="#8b8c96" /></Cell>
        <Cell $w={36}><MdRefresh size={20} /></Cell>
        <Cell $w={36}><Home /></Cell>
        <Omnibox><Cell $w={32}><MdZoomIn size={20} /></Cell><Cell $w={32}><MdStarOutline size={21} /></Cell></Omnibox>
        <Cell $w={54}><MdOutlineExtension size={21} /></Cell>
        <Sep $c="#14151a" $h={16} $w={2} />
        <Cell $w={49}><MdOutlineFileDownload size={24} /></Cell>
        <Cell $w={24}><svg width="16" height="16"><path d="M1.500 1.500h13v13h-13z" fill="none" stroke="#fff" strokeWidth="2" /><path d="M9 1h6v14H9z" fill="#fff" /></svg></Cell>
        <Cell $w={46}><Avatar>G</Avatar></Cell>
        <Cell $w={26}><MdMoreVert size={20} /></Cell>
      </ChromeBar>
    </Strip>
    <PdfBar>
      <Cell $w={36}><MdMenu size={21} /></Cell>
      <PdfTitle>si t14.pdf</PdfTitle>
      <Cell $w={36}><MdFileDownload size={21} /></Cell>
      <Cell $w={36}><MdPrint size={21} /></Cell>
      <Cell $w={36}><MdMoreVert size={21} /></Cell>
    </PdfBar>
    <PdfView>
      <PageArea>
        <Page>
          <Para>o los resultados numéricos haciendo clic en Informe.</Para>
          <Report>
            <ReportRow $in={0}><b>\\DESKTOP-OH6C0AS</b></ReportRow>
            <ReportRow $in={11}><b>Disco físico</b><span>_Total</span></ReportRow>
            <ReportRow $in={29} $plain><b>% de tiempo de disco</b><span>2,010</span></ReportRow>
            <ReportRow $in={29} $plain><b>% de tiempo de escritura en disco</b><span>0,021</span></ReportRow>
          </Report>
        </Page>
      </PageArea>
      <PageScroll>
        <svg width="8" height="6"><path d="M4 1l4 4H0z" fill="#505050" /></svg>
        <i />
        <svg width="8" height="6"><path d="M4 5L0 1h8z" fill="#505050" /></svg>
      </PageScroll>
    </PdfView>
  </>
);

const PhotosWindow = () => (
  <Photos>
    <PhotosHead>
      <PhotosLogo><LineIcon d="M4 2h8q2 0 2 2v7q0 2-2 2H4q-2 0-2-2V4q0-2 2-2zM3 12l5-5 5 5M10.500 5h.5M6 15.500h7q3 0 3-3V6" /></PhotosLogo>
      <PhotosTitle>Captura de pantalla (140).png</PhotosTitle>
      <Cell $w={40} $h={48}><LineIcon d="M8 15H3q-1.500 0-1.500-1.500V3Q1.500 1.500 3 1.500h10q1.500 0 1.500 1.500v4M2 13.500L8 8l2 2M10.500 5h1M9.500 16.500l1-3.500 5-5 2 2-5 5z" /></Cell>
      <Cell $w={40} $h={48}><LineIcon d="M1.500 9a7 7 0 1 1 12 5M13 16.500v-3.300h3.500M10.500 9a1.500 1.500 0 1 1-3 0 1.500 1.500 0 1 1 3 0" /></Cell>
      <Cell $w={40} $h={48}><LineIcon d="M2 4h14M6.500 4q0-2.500 2.500-2.500T11.500 4M3.500 4l1 12.500h9l1-12.500M7.500 7.500v6M10.500 7.500v6" /></Cell>
      <Cell $w={40} $h={48}><LineIcon c="#777" d="M9 16L2.500 9.500C-.5 5 5.500 0 9 4.500 12.500 0 18.500 5 15.500 9.500z" /></Cell>
      <Cell $w={40} $h={48}><LineIcon d="M16.500 9a7.500 7.500 0 1 1-15 0 7.500 7.500 0 1 1 15 0M9 8v5M9 5.200v.3" /></Cell>
      <Cell $w={40} $h={48}><LineIcon d="M4.500 5V2h9v3M4.500 13H1.500V7q0-2 2-2h11q2 0 2 2v6h-3M4.500 9.500h9v7h-9z" /></Cell>
      <Cell $w={40} $h={50}><OneDriveOff /></Cell>
      <Cell $w={40} $h={48}><Clip /></Cell>
      <Cell $w={40} $h={50}><svg width="20" height="4" fill="#fff"><circle cx="2" cy="2" r="1.400" /><circle cx="10" cy="2" r="1.400" /><circle cx="18" cy="2" r="1.400" /></svg></Cell>
      <Spacer />
      <Cell $w={46} $h={32}><WinMin c="#fff" /></Cell>
      <Cell $w={46} $h={32}><WinMax c="#fff" /></Cell>
      <Cell $w={46} $h={32}><WinClose c="#fff" /></Cell>
    </PhotosHead>
    <Picture>
      <MiniTabs><TabSearch $s={17}><MdExpandMore size={10} color="#fff" /></TabSearch><MdPublic size={11} /><span>p14 SI.pdf</span></MiniTabs>
      <MiniBar>
        <Cell $w={22}><MdArrowBack size={12} /></Cell><Cell $w={22}><MdArrowForward size={12} color="#8b8c96" /></Cell>
        <Cell $w={23}><MdRefresh size={12} /></Cell><Cell $w={22}><Home s={13} /></Cell>
        <MiniPill><i><svg width="9" height="8" fill="none" stroke="#fff"><path d="M4 1.500h5M0 6h5" /><circle cx="1.800" cy="1.800" r="1.200" /><circle cx="7" cy="6" r="1.200" /></svg></i>educa</MiniPill>
      </MiniBar>
      <MiniPdf><MdMenu size={14} />si t14.pdf</MiniPdf>
      <MiniTaskbar><Cell $w={30}><WinLogo s={10} /></Cell><MiniSearch><Mag s={11} c="#444" />Buscar</MiniSearch></MiniTaskbar>
    </Picture>
    <PhotosFoot>
      <Cell $w={40}><LineIcon d="M3 3h12q2 0 2 2v8q0 2-2 2H3q-2 0-2-2V5q0-2 2-2zM1.500 12h15M5 12v3M9 12v3M13 12v3" /></Cell>
      <Gap $w={2} />
      <Sep $c="#454545" $h={24} />
      <Spacer />
      <Zoom>62 %</Zoom>
      <Cell $w={40}><MdZoomIn size={17} color="#666" /></Cell>
      <Cell $w={40}><LineIcon d="M14 8A6 6 0 1 1 2 8a6 6 0 1 1 12 0M12.500 12.500L17 17M5 8h6M8 5v6" /></Cell>
      <Cell $w={40}><LineIcon c="#777" d="M2 4h14v10H2z" /></Cell>
      <Cell $w={40}><LineIcon d="M3 3h12q1 0 1 1v9q0 2-1 2H3q-1 0-1-2V4q0-1 1-1zM6 7v4M12 7v4M9 8v.2M9 11v.2" /></Cell>
      <Cell $w={45}><LineIcon d="M2.500 15.500l13-13M10 2.500h5.500V8M2.500 10v5.500H8" /></Cell>
    </PhotosFoot>
  </Photos>
);

const Divider = ({ w }: { w: number }) => <Cell $w={w}><Sep $c="#8a8a8a" $h={18} /></Cell>;

const MonitorWindow = () => (
  <Mmc>
    <TitleBar>
      <Gauge /><span>Monitor de rendimiento</span><Spacer />
      <Cell $w={40}><WinMin c="#999" /></Cell><Cell $w={41}><WinMax c="#999" /></Cell><Cell $w={44}><WinClose c="#999" /></Cell>
    </TitleBar>
    <MenuBar>
      <MenuItem $w={24}><Gauge /></MenuItem>
      <MenuItem $w={57}>Archivo</MenuItem><MenuItem $w={53}>Acción</MenuItem><MenuItem $w={32}>Ver</MenuItem>
      <MenuItem $w={58}>Ventana</MenuItem><MenuItem $w={50}>Ayuda</MenuItem>
      <MdiButtons>
        <i><svg width="10" height="10"><path d="M2 8h6" stroke="#5c6b7a" strokeWidth="2" /></svg></i>
        <i><svg width="10" height="10" fill="none" stroke="#5c6b7a"><path d="M1.500 5h5v3.500h-5zM1 4.500h6M3.500 4V1.500h5v4H7M3 1.800h6" strokeWidth="1.200" /></svg></i>
        <i><svg width="10" height="10"><path d="M2 2l6 6M8 2L2 8" stroke="#5c6b7a" strokeWidth="2" /></svg></i>
      </MdiButtons>
    </MenuBar>
    <ToolBar>
      <Cell $w={24}><ArrowShape fill="#3fb0ee" stroke="#1f7cc4" /></Cell><Cell $w={22}><Flip><ArrowShape fill="#8e8e8e" stroke="#666" /></Flip></Cell><Divider w={6} />
      <Cell $w={27}><UpFolder /></Cell><Cell $w={22} $h={21} $on><TreeToggle /></Cell><Divider w={4} />
      <Cell $w={28}><Props /></Cell><Cell $w={21}><Printer /></Cell><Divider w={6} />
      <Cell $w={26}><Help /></Cell><Cell $w={23} $h={21} $on><TreeToggle right /></Cell>
    </ToolBar>
    <Body>
      <TreePane>
        <TreeRow $in={4}><Folder />Raíz de consola</TreeRow>
        <TreeRow $in={6}><Chevron d="down" /><Gauge />Rendimiento</TreeRow>
        <TreeRow $in={25} $tight><Chevron d="down" /><Folder k="mon" />Herramientas de supervisi</TreeRow>
        <TreeRow $in={59} $sel $tight><MonitorIcon />Monitor de rendimien</TreeRow>
        <TreeRow $in={25} $tight><Chevron d="right" c="#a0a0a0" /><Folder k="cube" />Conjuntos de recopilador</TreeRow>
        <TreeRow $in={25}><Chevron d="right" c="#a0a0a0" /><Folder k="rep" />Informes</TreeRow>
        <HScroll><Cell $w={17}><Chevron d="left" c="#505050" /></Cell><i /><Cell $w={17}><Chevron d="right" c="#505050" /></Cell></HScroll>
      </TreePane>
      <CenterPane>
        <ChartTools>
          <Cell $w={23} $h={21} $on><LineChart /></Cell><Cell $w={22}><Cube /></Cell><Cell $w={25}><ChartPic /></Cell>
          <Cell $w={12}><svg width="8" height="5"><path d="M0 0h8L4 5z" /></svg></Cell><Divider w={10} />
          <Cell $w={22}><Plus /></Cell><Cell $w={24}><Cross /></Cell><Cell $w={22}><Pen /></Cell><Divider w={7} />
          <Cell $w={25}><Copy /></Cell><Cell $w={22}><Paste /></Cell><Cell $w={23}><Props /></Cell><Cell $w={23}><Lens /></Cell><Divider w={6} />
          <Cell $w={26}><Pause /></Cell><Cell $w={22}><Step /></Cell><Divider w={6} />
        </ChartTools>
        <ChartBox><Chart /></ChartBox>
        <Stats>
          <StatLabel $w={40}>Último</StatLabel><StatBox>---------</StatBox>
          <StatLabel $w={56}>Promedio</StatLabel><StatBox>---------</StatBox>
          <StatLabel $w={46}>Mínimo</StatLabel><StatBox>---------</StatBox>
          <StatLabel $w={48}>Máximo</StatLabel><StatBox>---------</StatBox>
          <StatLabel $w={52}>Duración</StatLabel><StatBox $last>1:40</StatBox>
        </Stats>
        <List>
          <Rows>
            <ListHead>{["Mos...", "Color", "Escala", "Contador", "Instan...", "Prima...", "Objeto", "Equipo"].map((h) => <span key={h}>{h}</span>)}</ListHead>
            {counters.map(([c, scale, name], i) => (
              <ListRow key={i}>
                <Check><CheckMark /></Check><Stroke $c={c} /><span>{scale}</span><span>{name}</span><span>_Total</span><span>---</span><span>Disco físico</span><span>\\DESKTOP-G...</span>
              </ListRow>
            ))}
            <ListRow><Check /></ListRow>
          </Rows>
          <VScroll><Chevron d="up" c="#505050" /><i /><Chevron d="down" c="#505050" /></VScroll>
        </List>
      </CenterPane>
      <ActionsPane>
        <ActionsHead>Acciones</ActionsHead>
        <ActionsGroup>Monitor de rendimiento<svg width="9" height="6"><path d="M4.500 0L9 5.500H0z" /></svg></ActionsGroup>
        <ActionsItem>Acciones adicionales<svg width="6" height="10"><path d="M.5 0l5 5-5 5z" /></svg></ActionsItem>
      </ActionsPane>
    </Body>
    <StatusBar><i /><i /></StatusBar>
  </Mmc>
);

export default function App() {
  return (
    <Screen>
      <Global />
      <ChromeWindow />
      <PhotosWindow />
      <MonitorWindow />
      <Taskbar>
        <Cell $w={48}><WinLogo s={16} /></Cell>
        <Search><Mag s={17} c="#222" /><span>Buscar</span><Fish /></Search>
        <AppButton><TaskView /></AppButton>
        <AppButton><Edge /></AppButton>
        <AppButton $run><Explorer /></AppButton>
        <AppButton><Store /></AppButton>
        <AppButton><Mail /></AppButton>
        <AppButton $run><ChromeLogo /></AppButton>
        <AppButton><Snip /></AppButton>
        <AppButton $run><VBox /></AppButton>
        <AppButton $run><App2019 /></AppButton>
        <AppButton $run><BigGauge /></AppButton>
        <AppButton $run><PhotosApp /></AppButton>
        <Spacer />
        <Cell $w={24}><Sun /></Cell>
        <Weather><span>12°C</span><span>Parc. soleado</span></Weather>
        <Cell $w={24}><svg width="13" height="8"><path d="M1 7l5.500-5.500L12 7" fill="none" stroke="#fff" strokeWidth="1.300" /></svg></Cell>
        <Cell $w={24}><Net /></Cell>
        <Cell $w={24}><Vol /></Cell>
        <Clock>10:17<br />30/01/2024</Clock>
        <Cell $w={48}><Notice /></Cell>
        <Cell $w={5}><Sep $c="#5c6680" $h={40} /></Cell>
      </Taskbar>
    </Screen>
  );
}
